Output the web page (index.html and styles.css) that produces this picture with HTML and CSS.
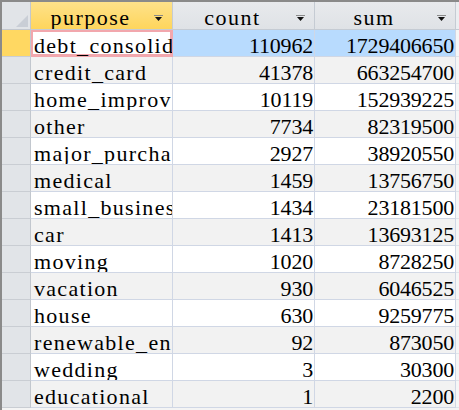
FILE: index.html
```html
<!DOCTYPE html>
<html>
<head>
<meta charset="utf-8">
<link rel="stylesheet" href="styles.css">
</head>
<body>
<div class="sheet">
  <div class="corner"><svg class="tri" width="12" height="12" viewBox="0 0 12 12"><polygon points="12,0 12,12 0,12" fill="#c9ced6"/></svg></div>
  <div class="hd hd-cur">purpose<svg class="arrow" width="9" height="6" viewBox="0 0 9 6"><rect x="0" y="0" width="9" height="1" fill="#8a8a8a"/><polygon points="1,2 8,2 4.5,6" fill="#111"/></svg></div>
  <div class="hd">count<svg class="arrow" width="9" height="6" viewBox="0 0 9 6"><rect x="0" y="0" width="9" height="1" fill="#8a8a8a"/><polygon points="1,2 8,2 4.5,6" fill="#111"/></svg></div>
  <div class="hd">sum<svg class="arrow" width="9" height="6" viewBox="0 0 9 6"><rect x="0" y="0" width="9" height="1" fill="#8a8a8a"/><polygon points="1,2 8,2 4.5,6" fill="#111"/></svg></div>
  <div class="edge edge-hd"></div>

  <div class="sel sel-cur"></div><div class="c txt focus">debt_consolidation</div><div class="c num cur">110962</div><div class="c num cur">1729406650</div><div class="edge"></div>
  <div class="sel"></div><div class="c txt alt">credit_card</div><div class="c num alt">41378</div><div class="c num alt">663254700</div><div class="edge"></div>
  <div class="sel"></div><div class="c txt">home_improvement</div><div class="c num">10119</div><div class="c num">152939225</div><div class="edge"></div>
  <div class="sel"></div><div class="c txt alt">other</div><div class="c num alt">7734</div><div class="c num alt">82319500</div><div class="edge"></div>
  <div class="sel"></div><div class="c txt">major_purchase</div><div class="c num">2927</div><div class="c num">38920550</div><div class="edge"></div>
  <div class="sel"></div><div class="c txt alt">medical</div><div class="c num alt">1459</div><div class="c num alt">13756750</div><div class="edge"></div>
  <div class="sel"></div><div class="c txt">small_business</div><div class="c num">1434</div><div class="c num">23181500</div><div class="edge"></div>
  <div class="sel"></div><div class="c txt alt">car</div><div class="c num alt">1413</div><div class="c num alt">13693125</div><div class="edge"></div>
  <div class="sel"></div><div class="c txt">moving</div><div class="c num">1020</div><div class="c num">8728250</div><div class="edge"></div>
  <div class="sel"></div><div class="c txt alt">vacation</div><div class="c num alt">930</div><div class="c num alt">6046525</div><div class="edge"></div>
  <div class="sel"></div><div class="c txt">house</div><div class="c num">630</div><div class="c num">9259775</div><div class="edge"></div>
  <div class="sel"></div><div class="c txt alt">renewable_energy</div><div class="c num alt">92</div><div class="c num alt">873050</div><div class="edge"></div>
  <div class="sel"></div><div class="c txt">wedding</div><div class="c num">3</div><div class="c num">30300</div><div class="edge"></div>
  <div class="sel"></div><div class="c txt alt">educational</div><div class="c num alt">1</div><div class="c num alt">2200</div><div class="edge"></div>
</div>
</body>
</html>
```

FILE: styles.css
```css
html, body {
  margin: 0;
  padding: 0;
  background: #f4f4f4;
  overflow: hidden;
}

.sheet {
  width: 459px;
  height: 410px;
  box-sizing: border-box;
  border-top: 2px solid #8a8a8a;
  border-left: 2px solid #8a8a8a;
  display: grid;
  grid-template-columns: 29px 142px 142px 141px 1fr;
  grid-auto-rows: 27px;
  grid-template-rows: 28px;
  font-family: "Liberation Serif", "DejaVu Serif", serif;
  font-size: 22px;
  color: #000;
  overflow: hidden;
}

.corner {
  background: #e1e4e8;
  border-right: 1px solid #c2c7ce;
  border-bottom: 1px solid #c2c7ce;
  position: relative;
}
.tri {
  position: absolute;
  right: 2px;
  bottom: 2px;
}

.hd {
  position: relative;
  background: linear-gradient(#e8eaed, #dfe2e6);
  border-right: 1px solid #c5cbd3;
  border-bottom: 1px solid #c5cbd3;
  line-height: 26px;
  padding: 3px 22px 0 0;
  text-align: center;
  letter-spacing: 1.5px;
  white-space: nowrap;
  overflow: hidden;
}
.hd-cur {
  background: linear-gradient(#fee28a, #fed55c);
}
.arrow {
  position: absolute;
  right: 9px;
  top: 13px;
}

.edge {
  background: #f6f6f6;
  border-bottom: 1px solid #e0e4ea;
}
.edge-hd {
  background: #eceef1;
  border-bottom: 1px solid #c5cbd3;
}

.sel {
  background: #e1e4e8;
  border-right: 1px solid #c2c7ce;
  border-bottom: 1px solid #c9cdd3;
}
.sel-cur {
  background: #ffd862;
}

.c {
  background: #fff;
  border-right: 1px solid #d0d7e5;
  border-bottom: 1px solid #d0d7e5;
  line-height: 26px;
  padding-top: 3px;
  white-space: nowrap;
  overflow: hidden;
  box-sizing: border-box;
}
.txt {
  padding-left: 3px;
  letter-spacing: 1.3px;
}
.num {
  text-align: right;
  padding-right: 1px;
  letter-spacing: -0.2px;
}
.alt {
  background: #f2f2f2;
}
.cur {
  background: #b8dbfe;
}
.focus {
  box-shadow: inset 0 0 0 2px #f2a7ad;
  border-color: #f2a7ad;
}
```
